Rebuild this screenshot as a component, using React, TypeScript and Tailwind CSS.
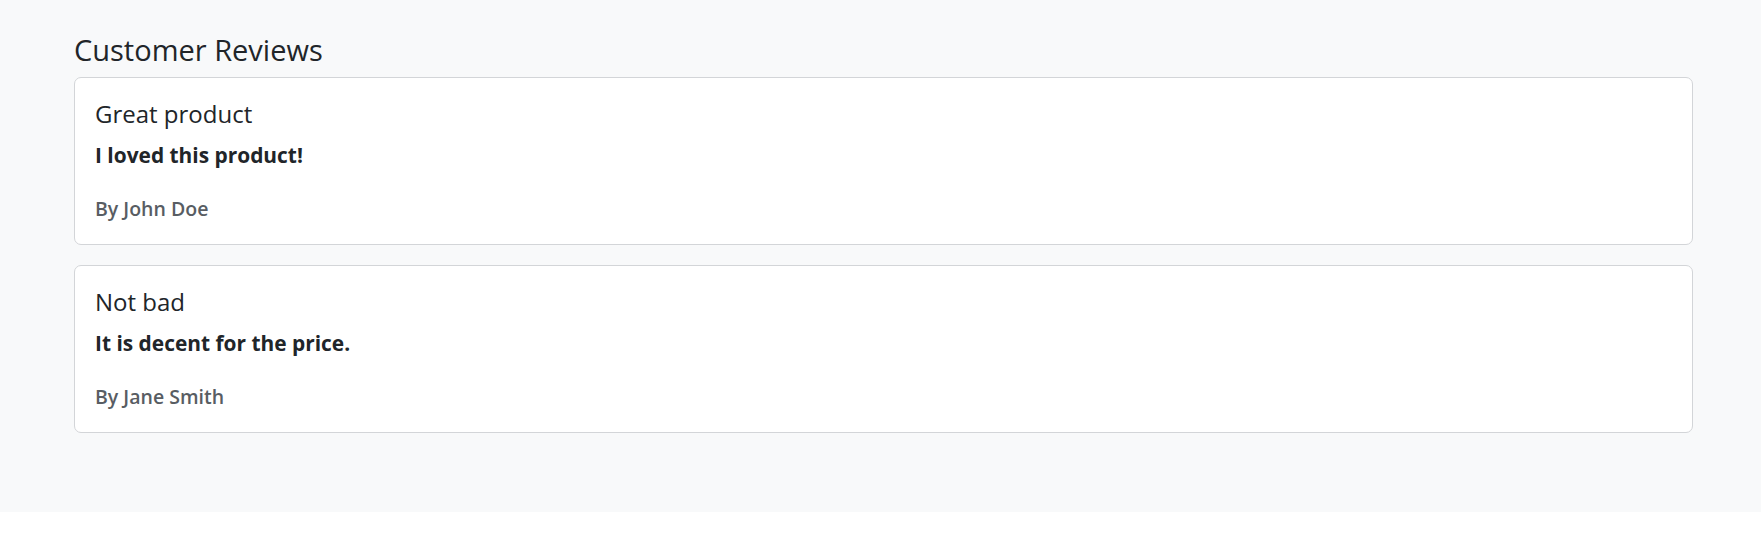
import React from 'react';

const REVIEWS = [
  { id: 1, title: 'Great product', body: 'I loved this product!', author: 'John Doe' },
  { id: 2, title: 'Not bad', body: 'It is decent for the price.', author: 'Jane Smith' },
];

export default function App() {
  return (
    <div className="bg-white" style={{ fontFamily: '"Segoe UI", "Open Sans", sans-serif' }}>
      <section className="bg-[#f8f9fa] pt-[32px] pb-[79px] pl-[74px] pr-[68px] text-[#212529]">
        <h3 className="text-[29px] leading-[35px] font-normal mb-[10px]">Customer Reviews</h3>

        <div className="flex flex-col gap-[20px]">
          {REVIEWS.map((review) => (
            <div
              key={review.id}
              className="bg-white border border-[#d3d5d8] rounded-[7px] px-[20px] pt-[21px] pb-[23px]"
            >
              <h5 className="text-[24px] leading-[29px] font-normal">{review.title}</h5>
              <p className="text-[20.9px] leading-[26px] font-bold mt-[14px]">{review.body}</p>
              <p className="text-[19.5px] leading-[25px] font-semibold text-[#585d63] mt-[28px]">
                By {review.author}
              </p>
            </div>
          ))}
        </div>
      </section>
    </div>
  );
}
